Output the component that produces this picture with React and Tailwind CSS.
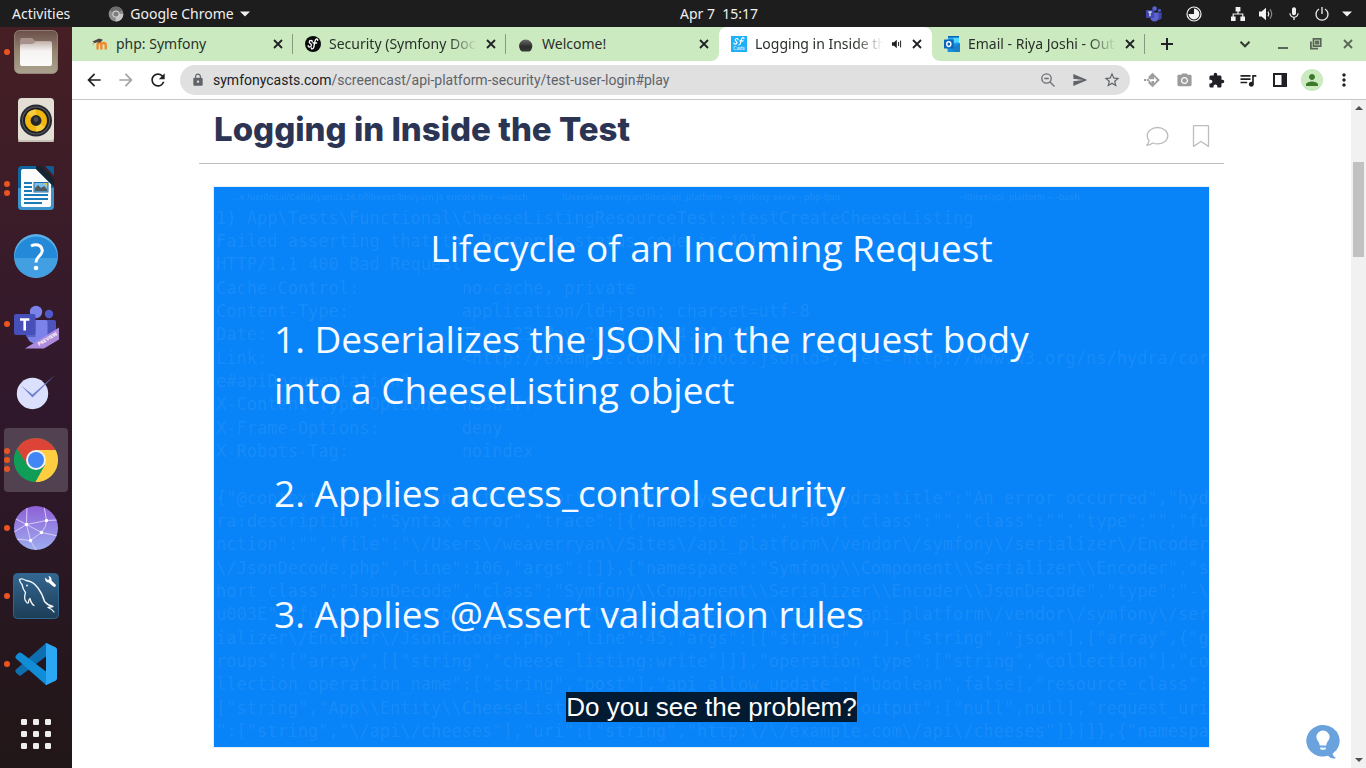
import React from "react";
import {
  MdArrowBack, MdArrowForward, MdRefresh, MdLock, MdSend, MdStarBorder, MdCameraAlt,
  MdExtension, MdQueueMusic, MdMoreVert, MdPerson, MdMic,
} from "react-icons/md";

const CODE = [
  "1) App\\Tests\\Functional\\CheeseListingResourceTest::testCreateCheeseListing",
  "Failed asserting that the Response status code is 401.",
  "HTTP/1.1 400 Bad Request",
  "Cache-Control:          no-cache, private",
  "Content-Type:           application/ld+json; charset=utf-8",
  "Date:                   Thu, 23 May 2019 15:34:04 GMT",
  "Link:                   <http://example.com/api/docs.jsonld>; rel=\"http://www.w3.org/ns/hydra/cor",
  "e#apiDocumentation\"",
  "X-Content-Type-Options: nosniff",
  "X-Frame-Options:        deny",
  "X-Robots-Tag:           noindex",
  " ",
  "{\"@context\":\"\\/api\\/contexts\\/Error\",\"@type\":\"hydra:Error\",\"hydra:title\":\"An error occurred\",\"hyd",
  "ra:description\":\"Syntax error\",\"trace\":[{\"namespace\":\"\",\"short_class\":\"\",\"class\":\"\",\"type\":\"\",\"fu",
  "nction\":\"\",\"file\":\"\\/Users\\/weaverryan\\/Sites\\/api_platform\\/vendor\\/symfony\\/serializer\\/Encoder",
  "\\/JsonDecode.php\",\"line\":106,\"args\":[]},{\"namespace\":\"Symfony\\\\Component\\\\Serializer\\\\Encoder\",\"s",
  "hort_class\":\"JsonDecode\",\"class\":\"Symfony\\\\Component\\\\Serializer\\\\Encoder\\\\JsonDecode\",\"type\":\"-\\",
  "u003E\",\"function\":\"decode\",\"file\":\"\\/Users\\/weaverryan\\/Sites\\/api_platform\\/vendor\\/symfony\\/ser",
  "ializer\\/Encoder\\/JsonEncoder.php\",\"line\":45,\"args\":[[\"string\",\"\"],[\"string\",\"json\"],[\"array\",{\"g",
  "roups\":[\"array\",[[\"string\",\"cheese_listing:write\"]]],\"operation_type\":[\"string\",\"collection\"],\"co",
  "llection_operation_name\":[\"string\",\"post\"],\"api_allow_update\":[\"boolean\",false],\"resource_class\":",
  "[\"string\",\"App\\\\Entity\\\\CheeseListing\"],\"input\":[\"null\",null],\"output\":[\"null\",null],\"request_uri",
  "\":[\"string\",\"\\/api\\/cheeses\"],\"uri\":[\"string\",\"http:\\/\\/example.com\\/api\\/cheeses\"]}]]},{\"namespa",
];

/* ---------- small glyphs ---------- */

function TeamsMini() {
  return (
    <svg viewBox="0 0 16 16" className="size-4">
      <circle cx="13.4" cy="4.4" r="1.7" fill="#4b53bc" />
      <circle cx="8.6" cy="2.6" r="2.3" fill="#5b62d0" />
      <path d="M11.5 6.6h4.2v4.6a2.6 2.6 0 0 1-4.2 2z" fill="#3f46a8" />
      <path d="M4.5 6.6h8v5a4 4 0 0 1-8 0z" fill="#5b62d0" />
      <rect x="0" y="4" width="8" height="8" rx=".8" fill="#4048b0" />
      <path d="M2.2 6h3.6M4 6v4.2" stroke="#fff" strokeWidth="1.1" />
    </svg>
  );
}

function TimerGlyph() {
  return (
    <svg viewBox="0 0 16 16" className="size-4">
      <circle cx="8" cy="8" r="7" fill="none" stroke="#f2f2f2" strokeWidth="1.2" />
      <path d="M8 8V2.6A5.4 5.4 0 1 1 2.6 8z" fill="#f2f2f2" />
    </svg>
  );
}

function NetworkGlyph() {
  return (
    <svg viewBox="0 0 16 16" className="size-4" fill="#f2f2f2">
      <path d="M5.6 1h4.8v4.5H5.6zM1 10.5h4.6V15H1zM10.4 10.5H15V15h-4.6z" />
      <path d="M8 5v3M3.2 11V8h9.6v3" fill="none" stroke="#f2f2f2" strokeWidth="1.2" />
    </svg>
  );
}

function VolumeGlyph() {
  return (
    <svg viewBox="0 0 16 16" className="size-4">
      <path d="M1 5.5h2.6L8 1.8v12.4L3.6 10.5H1z" fill="#f2f2f2" />
      <path d="M10 5.6q1.6 2.4 0 4.8" fill="none" stroke="#f2f2f2" strokeWidth="1.2" />
      <path d="M12 3.4q3.4 4.6 0 9.2" fill="none" stroke="#8a8a8a" strokeWidth="1.2" />
    </svg>
  );
}

function PowerGlyph() {
  return (
    <svg viewBox="0 0 16 16" className="size-4" fill="none" stroke="#f2f2f2" strokeWidth="1.3">
      <path d="M5 3a6 6 0 1 0 6 0M8 1v7" />
    </svg>
  );
}

function Caret() {
  return (
    <svg viewBox="0 0 10 6" className="h-1.5 w-2.5 shrink-0" fill="#f2f2f2">
      <path d="M0 .5h10L5 5.5z" />
    </svg>
  );
}

function CrossGlyph() {
  return (
    <svg viewBox="0 0 12 12" className="size-3" fill="none" stroke="currentColor" strokeWidth="1.8">
      <path d="m2 2 8 8M10 2l-8 8" />
    </svg>
  );
}

function TabAudioGlyph() {
  return (
    <svg viewBox="0 0 12 12" className="size-3 shrink-0" fill="#202124">
      <path d="M1 4.300h2L5.800 1.800v8.400L3 7.700H1z" />
      <path d="M7.600 4v4M9.600 2.600v6.800" fill="none" stroke="#202124" strokeWidth="1" />
    </svg>
  );
}

function ChromeMono() {
  return (
    <svg viewBox="0 0 16 16" className="size-4 shrink-0">
      <circle cx="8" cy="8" r="7.4" fill="#8e8e8e" />
      <path d="M8 8 1.6 4.4A7.4 7.4 0 0 1 14.4 4.4z" fill="#6c6c6c" />
      <path d="M8 8h7.4A7.4 7.4 0 0 1 7.6 15.4z" fill="#c4c4c4" />
      <circle cx="8" cy="8" r="3.6" fill="#dcdcdc" />
      <circle cx="8" cy="8" r="2.6" fill="#7d7d7d" />
    </svg>
  );
}

/* ---------- favicons ---------- */

function MoodleIcon() {
  return (
    <svg viewBox="0 0 16 16" className="size-4 shrink-0">
      <path d="M5.6 13.4V8.6q0-1.6 1.9-1.6t1.9 1.6v4.8M9.4 13.4V8.6q0-1.6 2.1-1.6t2.2 1.6v4.8" fill="none" stroke="#f28a2c" strokeWidth="2.4" />
      <path d="M.5 5.6 7 2.6l4 1.2-2.8 2.6-3.4-.2-2.2 1z" fill="#4a4642" />
      <path d="M1.4 6.2q-1 2 0 3.2" fill="none" stroke="#d9a777" strokeWidth=".9" />
    </svg>
  );
}

function SymfonyIcon() {
  return (
    <svg viewBox="0 0 16 16" className="size-4 shrink-0">
      <circle cx="8" cy="8" r="8" fill="#0a0a0a" />
      <g fill="none" stroke="#fff" strokeLinecap="round" strokeWidth="1.3">
        <path d="M7.2 5.9q.2-1.5-1.2-1.5-1.7.1-1.8 1.6c0 1.6 2.3 1.5 2.2 3.2q-.2 1.8-2 1.8-1.4 0-1.2-1.3" />
        <path d="M12.6 4.3q.2-1.4-1.1-1.3-1.3.3-1.8 3.4L8.9 10.8q-.5 2.2-1.9 2.1-.8-.1-.6-.9M8.2 7h3.4" />
      </g>
    </svg>
  );
}

function BallIcon() {
  return (
    <svg viewBox="0 0 16 16" className="size-4 shrink-0">
      <defs>
        <linearGradient id="ball" x1="0" y1="0" x2="0" y2="1">
          <stop offset="0" stopColor="#6a6a6a" />
          <stop offset=".6" stopColor="#2c2c2c" />
          <stop offset="1" stopColor="#3a3a3a" />
        </linearGradient>
      </defs>
      <path d="M4 15.6A6.6 6.6 0 1 1 11.4 15.6z" fill="url(#ball)" />
    </svg>
  );
}

function CastsIcon() {
  return (
    <svg viewBox="0 0 16 16" className="size-4 shrink-0">
      <rect width="16" height="16" fill="#1fb0fa" />
      <g fill="none" stroke="#fff" strokeLinecap="round" strokeWidth="1.2">
        <path d="M7 3.6q0-1.2-1.3-1.1-1.5.2-1.5 1.5c0 1.2 1.9 1.2 1.8 2.6q-.2 1.5-1.8 1.5-1.3 0-1.2-1" />
        <path d="M13 2.6q0-1-1.1-.9-1.3.3-1.7 2.6L9.5 7.2q-.4 1.7-1.6 1.7M8.8 4.8h3.4" />
      </g>
      <text x="2.2" y="14.400" fontSize="4.800" fontFamily="Lato, sans-serif" fill="#fff">Casts</text>
    </svg>
  );
}

function OutlookIcon() {
  return (
    <svg viewBox="0 0 16 16" className="size-4 shrink-0">
      <rect x="4" y="0" width="11" height="9" fill="#28a8ea" />
      <rect x="9.5" y="1.5" width="5.5" height="5" fill="#50d9ff" />
      <rect x="4" y="0" width="11" height="1.5" fill="#0364b8" />
      <path d="M3.5 8.5 16 7v8a1 1 0 0 1-1 1H4.5a1 1 0 0 1-1-1z" fill="#1490df" />
      <path d="M16 7.5 8 12l2 4h5a1 1 0 0 0 1-1z" fill="#1a7fc9" />
      <rect x="0" y="3.6" width="9.6" height="9" rx=".6" fill="#0a63bd" />
      <ellipse cx="4.8" cy="8.1" rx="2.1" ry="2.4" fill="none" stroke="#fff" strokeWidth="1.4" />
    </svg>
  );
}

/* ---------- dock icons ---------- */

function FilesIcon() {
  return (
    <svg viewBox="0 0 44 44" className="size-11">
      <defs>
        <linearGradient id="fi" x1="0" y1="0" x2="0" y2="1">
          <stop offset="0" stopColor="#6a4f49" />
          <stop offset=".5" stopColor="#958672" />
          <stop offset="1" stopColor="#aaa28f" />
        </linearGradient>
        <linearGradient id="ff" x1="0" y1="0" x2="0" y2="1">
          <stop offset="0" stopColor="#c2b2ac" />
          <stop offset=".4" stopColor="#f6f4f3" />
          <stop offset="1" stopColor="#fbfafa" />
        </linearGradient>
      </defs>
      <rect x=".5" y=".5" width="43" height="43" rx="5" fill="url(#fi)" stroke="#9b8f7f" strokeWidth=".8" />
      <path d="M6 10q0-2 2-2h9q1.5 0 2.5 1.4T22 11h14q2 0 2 2v6H6z" fill="#a8918d" />
      <path d="M6 16q0-2 2-2h10q2 0 4-2.8h14q2 0 2 2V34q0 2-2 2H8q-2 0-2-2z" fill="url(#ff)" />
    </svg>
  );
}

function RhythmIcon() {
  return (
    <svg viewBox="0 0 44 44" className="size-11">
      <rect x="4" y="0" width="36" height="44" rx="4" fill="#e3dfd4" />
      <rect x="4" y="42" width="36" height="2" rx="1" fill="#c5c1b6" />
      <circle cx="22" cy="22.5" r="16" fill="#272a33" />
      <circle cx="22" cy="22.5" r="14" fill="#5b5d62" />
      <circle cx="22" cy="22.5" r="13" fill="#1d1f25" />
      <circle cx="22" cy="22.5" r="11" fill="#f0b70f" />
      <path d="M22 22.5 13 16A11 11 0 0 1 22 11.5zM22 22.5l9 6.5a11 11 0 0 1-9 4.5z" fill="#f7cd3e" />
      <circle cx="22" cy="22.5" r="5.4" fill="#25272b" />
      <circle cx="22" cy="21.5" r="2.4" fill="#4a4c50" />
    </svg>
  );
}

function WriterIcon() {
  return (
    <svg viewBox="0 0 44 44" className="size-11">
      <path d="M8 0h18l14 14v26q0 4-4 4H8q-4 0-4-4V4q0-4 4-4z" fill="#0f66a0" />
      <path d="M4 22h36v18q0 4-4 4H8q-4 0-4-4z" fill="#3b94cc" />
      <path d="M9 3h13l15 15v21q0 2-2 2H9q-2 0-2-2V5q0-2 2-2z" fill="#fcfcfc" />
      <path d="M22 3V0h5l13 13v8z" fill="#16242f" />
      <path d="M31 0h8q1 0 1 1v9z" fill="#0e5c93" />
      <path d="M10 17h8M10 21h8M10 25h8M10 29h24M10 33h24M10 37h18" stroke="#1b7ab8" strokeWidth="2" />
      <rect x="20" y="16.500" width="14" height="9.500" fill="#7fc0e8" stroke="#1b6ea8" strokeWidth="1" />
      <path d="M21 25v-3l3-3 3 3 3-2 3 3v2z" fill="#505a5f" />
      <path d="M30 17h3v3z" fill="#f1c232" />
    </svg>
  );
}

function HelpIcon() {
  return (
    <svg viewBox="0 0 44 44" className="size-11">
      <circle cx="22" cy="22" r="22" fill="#59b1ea" />
      <path d="M.5 24a21.5 21.5 0 1 1 43 0z" fill="#2489d8" />
      <path d="M.5 24a21.5 19.5 0 0 0 43 0z" fill="#429fe2" />
      <path d="M17 12q5-2.500 9 0 4 3.500 1 8l-3 3.500q-2 2-2 5" fill="none" stroke="#fff" strokeWidth="3" />
      <circle cx="22" cy="34" r="2.3" fill="#fff" />
    </svg>
  );
}

function TeamsIcon() {
  return (
    <svg viewBox="0 0 46 44" className="mt-1.5 h-11 w-[46px]">
      <circle cx="36" cy="9" r="4.2" fill="#5059c9" />
      <circle cx="23" cy="7" r="6.2" fill="#7b83eb" />
      <path d="M32 15h9q2 0 2 2v11q0 6-6 7h-5z" fill="#4d55bd" />
      <path d="M13.500 15h19q2 0 2 2v14q0 8-10 8.5-11-1.500-11-11.500z" fill="#7b83eb" />
      <path d="M11.500 15h11v17h-9q-1-3-1-6z" fill="#5961c4" />
      <rect x="1" y="9" width="21.5" height="21" rx="2" fill="#4650b8" />
      <path d="M7 14.500h9.400M11.700 14.500v11" stroke="#fff" strokeWidth="2.600" />
      <path d="M12 43.500 46 22.500v12L31 43.500z" fill="#ad8bdc" />
      <text x="26" y="41" fontSize="5" fontWeight="700" fontFamily="Open Sans, sans-serif" fill="#fff" transform="rotate(-31 26 41)">PREVIEW</text>
    </svg>
  );
}

function TodoIcon() {
  return (
    <svg viewBox="0 0 44 44" className="size-11">
      <circle cx="18.500" cy="23.500" r="15.700" fill="#dbe0fc" />
      <path d="M7 15.500 18.500 24.500 41 5 18.500 27.500z" fill="#6f80cf" />
    </svg>
  );
}

function ChromeIcon() {
  return (
    <svg viewBox="0 0 44 44" className="size-11">
      <circle cx="22" cy="22" r="22" fill="#109d58" />
      <path d="M22 0a22 22 0 0 1 19.600 12H22L13.300 27 3 10.900A22 22 0 0 1 22 0z" fill="#db4437" />
      <path d="M41.600 12A22 22 0 0 1 21.300 44l9.400-17L22 12z" fill="#ffcd40" />
      <path d="m3 10.900 10.300 16.100h17.400L21.300 44A22 22 0 0 1 3 10.900z" fill="#109d58" />
      <circle cx="22" cy="22" r="10" fill="#f1f1f1" />
      <circle cx="22" cy="22" r="8" fill="#4285f4" />
    </svg>
  );
}

function WebIcon() {
  return (
    <svg viewBox="0 0 44 44" className="size-11">
      <defs>
        <linearGradient id="web" x1="0" y1="0" x2="0" y2="1">
          <stop offset="0" stopColor="#8e5fd8" />
          <stop offset="1" stopColor="#9daef0" />
        </linearGradient>
        <clipPath id="webclip"><circle cx="22" cy="22" r="22" /></clipPath>
      </defs>
      <circle cx="22" cy="22" r="22" fill="url(#web)" />
      <g clipPath="url(#webclip)" fill="none" stroke="#d9ccf5" strokeWidth="1">
        <path d="M0 12 12.500 18.500 27.500 26.500 44 30M0 26 12.500 18.500 32.500 14.500 44 14M12.500 18.500 13 0M12.500 18.500 16.500 34.500 23 46M32.500 14.500 30 0M32.500 14.500Q33 20 27.500 26.500L16.500 34.500 2 33" />
      </g>
      <g fill="#fff">
        <circle cx="12.500" cy="18.500" r="1.700" />
        <circle cx="32.500" cy="14.500" r="1.700" />
        <circle cx="27.500" cy="26.500" r="1.700" />
        <circle cx="16.500" cy="34.500" r="1.700" />
      </g>
    </svg>
  );
}

function WorkbenchIcon() {
  return (
    <svg viewBox="0 0 46 46" className="size-[46px]">
      <defs>
        <linearGradient id="wb" x1="0" y1="0" x2="0" y2="1">
          <stop offset="0" stopColor="#336791" />
          <stop offset="1" stopColor="#1d3d57" />
        </linearGradient>
      </defs>
      <rect x=".5" y=".5" width="45" height="45" rx="4" fill="url(#wb)" stroke="#2f6690" />
      <g fill="none" stroke="#f3f7fa" strokeWidth="1.300" strokeLinejoin="round" strokeLinecap="round">
        <path d="M41 39q-2-3-6-4.500l5-1q-5-1-8.500-5Q30 22 25 15 20 8 13 7.500 9 5 6.500 6.500q0 2 2.500 5 1 5 3.500 8-2 6 .5 9 1.500 2.500 2.500 1 0-3 1.500-4 1 5 4 7" />
      </g>
      <circle cx="14" cy="12.500" r=".9" fill="#f3f7fa" />
      <path d="M32 4.500l3 2.500 1.500-1-1-3q3.500.500 3 4.500l4.500 4.500q0 2-2 2L35.500 9.500q-3.500 0-3.500-5z" fill="#fff" />
    </svg>
  );
}

function CodeIcon() {
  return (
    <svg viewBox="0 0 44 44" className="size-11">
      <path d="M32 1 2 27.500q-1.400 1.500 0 3L4.500 33q1.500 1 3 0L32 14.500z" fill="#0e6fb0" />
      <path d="m32 43-30-26.500q-1.400-1.500 0-3L4.500 11q1.500-1 3 0L32 29.500z" fill="#118dd8" />
      <path d="M31 1.500q.8-.8 2-.3l8.500 4Q43 6 43 7.500v29q0 1.500-1.500 2.300l-8.500 4q-1.200.5-2-.3 1 .5 1-1V2.500q0-1.500-1-1z" fill="#2ba7f3" />
    </svg>
  );
}

function AppsIcon() {
  return (
    <svg viewBox="0 0 30 30" className="size-[30px]" fill="#eeeeec">
      {[0, 12, 24].map((y) => [0, 12, 24].map((x) => <rect key={`${x}-${y}`} x={x} y={y} width="6" height="6" rx="1.300" />))}
    </svg>
  );
}

const DOCK = [
  { name: "Files", Icon: FilesIcon, dots: 1, first: true },
  { name: "Rhythmbox", Icon: RhythmIcon, dots: 0 },
  { name: "LibreOffice Writer", Icon: WriterIcon, dots: 2 },
  { name: "Help", Icon: HelpIcon, dots: 0 },
  { name: "Microsoft Teams", Icon: TeamsIcon, dots: 1 },
  { name: "To Do", Icon: TodoIcon, dots: 0 },
  { name: "Google Chrome", Icon: ChromeIcon, dots: 3, active: true },
  { name: "Web", Icon: WebIcon, dots: 1 },
  { name: "MySQL Workbench", Icon: WorkbenchIcon, dots: 1 },
  { name: "Visual Studio Code", Icon: CodeIcon, dots: 1 },
];

function DockItem({ name, Icon, dots, first, active }) {
  return (
    <button
      aria-label={name}
      className={`relative flex w-16 shrink-0 items-center justify-center rounded ${first ? "h-[57px] pb-[7px]" : "h-16"} ${active ? "bg-[#524251]" : ""}`}
    >
      <span className={`absolute inset-y-0 left-0 flex flex-col items-center justify-center gap-[3px] ${first ? "pb-[7px]" : ""}`}>
        {Array.from({ length: dots }, (_, i) => <span key={i} className="size-1.5 rounded-full bg-[#e95420]" />)}
      </span>
      <Icon />
    </button>
  );
}

function Dock() {
  return (
    <nav aria-label="Dock" className="flex w-[72px] shrink-0 flex-col items-center gap-1 overflow-hidden bg-gradient-to-b from-[#461f24] via-[#30182c] to-[#211617]">
      {DOCK.map((d) => <DockItem key={d.name} {...d} />)}
      <button aria-label="Show applications" className="mt-auto flex h-[68px] w-16 shrink-0 items-center justify-center">
        <AppsIcon />
      </button>
    </nav>
  );
}

function TopBar() {
  return (
    <header className="grid h-[27px] shrink-0 grid-cols-[1fr_auto_1fr] items-center bg-[#1d1d1d] px-3 text-sm text-[#f0f0f0]">
      <div className="flex items-center gap-[38px]">
        <button>Activities</button>
        <button className="flex items-center gap-1.5">
          <ChromeMono />
          <span>Google Chrome</span>
          <Caret />
        </button>
      </div>
      <button className="ml-[72px] whitespace-pre">Apr 7  15:17</button>
      <div className="flex items-center justify-end">
        <span className="mr-6"><TeamsMini /></span>
        <span className="mr-7"><TimerGlyph /></span>
        <button aria-label="System menu" className="flex items-center gap-3 pr-0.5">
          <NetworkGlyph />
          <VolumeGlyph />
          <MdMic className="size-4" />
          <PowerGlyph />
          <Caret />
        </button>
      </div>
    </header>
  );
}

const TABS = [
  { title: "php: Symfony", Icon: MoodleIcon, sep: true },
  { title: "Security (Symfony Docs)", Icon: SymfonyIcon, sep: true, fade: true },
  { title: "Welcome!", Icon: BallIcon },
  { title: "Logging in Inside the Test", Icon: CastsIcon, active: true, fade: true },
  { title: "Email - Riya Joshi - Outlook", Icon: OutlookIcon, sep: true, fade: true },
];

function Flare({ right }) {
  return (
    <svg viewBox="0 0 8 8" className={`absolute bottom-0 size-2 ${right ? "left-full" : "right-full"}`} fill="#fff">
      <path d={right ? "M0 0a8 8 0 0 0 8 8H0z" : "M8 0a8 8 0 0 1-8 8h8z"} />
    </svg>
  );
}

function Tab({ title, Icon, sep, active, fade }) {
  return (
    <div
      role="tab"
      aria-selected={!!active}
      className={`relative flex w-[213px] min-w-0 items-center gap-2 pr-[9px] pl-3 ${active ? "rounded-t-lg bg-white" : ""}`}
    >
      <Icon />
      <span className={`min-w-0 flex-1 overflow-hidden whitespace-nowrap ${fade ? "[mask-image:linear-gradient(to_right,#000_calc(100%-28px),transparent)]" : ""}`}>
        {title}
      </span>
      {active && <TabAudioGlyph />}
      <button aria-label={`Close ${title}`} className="shrink-0 text-[#202124]"><CrossGlyph /></button>
      {sep && <span className="absolute right-0 h-5 w-px bg-[#859a7e]" />}
      {active && <Flare />}
      {active && <Flare right />}
    </div>
  );
}

function TabStrip() {
  return (
    <div className="flex h-[34px] shrink-0 bg-[#cbeac0] pl-2 text-sm text-[#2a302a]">
      <div role="tablist" className="flex min-w-0">
        {TABS.map((t) => <Tab key={t.title} {...t} />)}
      </div>
      <button aria-label="New tab" className="flex w-11 shrink-0 items-center justify-center">
        <svg viewBox="0 0 12 12" className="size-3" stroke="#202124" strokeWidth="2"><path d="M6 0v12M0 6h12" /></svg>
      </button>
      <div className="ml-auto flex shrink-0 items-center gap-4 pr-2.5 text-[#5a6657]">
        <button aria-label="Search tabs" className="mr-1.5 px-0.5">
          <svg viewBox="0 0 14 14" className="size-[14px]" fill="none" stroke="#303a2d" strokeWidth="2"><path d="m2.500 4.800 4.500 4.500 4.500-4.500" /></svg>
        </button>
        <button aria-label="Minimize" className="pt-2">
          <svg viewBox="0 0 16 4" className="h-1 w-4"><rect x="2" y="1" width="10" height="2" fill="currentColor" /></svg>
        </button>
        <button aria-label="Restore">
          <svg viewBox="0 0 16 16" className="size-4" fill="none" stroke="currentColor" strokeWidth="1.800">
            <path d="M5.500 2.900h7.200v7.200H5.500zM8 5.400h2.200v2.200H8zM2.900 5.500v7.200h7.200" />
          </svg>
        </button>
        <button aria-label="Close window" className="flex w-4 justify-center"><CrossGlyph /></button>
      </div>
    </div>
  );
}

function ToolButton({ label, children }) {
  return (
    <button aria-label={label} className="flex h-8 w-8 shrink-0 items-center justify-center text-[#202124]">
      {children}
    </button>
  );
}

function Toolbar() {
  return (
    <div className="flex h-[39px] shrink-0 items-center border-b border-[#c8c8c8] bg-white px-1.5">
      <ToolButton label="Back"><MdArrowBack className="size-5" /></ToolButton>
      <ToolButton label="Forward"><MdArrowForward className="size-5 text-[#a3a3a3]" /></ToolButton>
      <ToolButton label="Reload"><MdRefresh className="size-5" /></ToolButton>
      <div className="mx-1.5 flex h-[30px] min-w-0 flex-1 items-center rounded-full bg-[#e0e0e0] pr-0.5 pl-[11px]">
        <MdLock className="size-[14px] shrink-0 text-[#5f6368]" />
        <a href="#play" className="ml-2 min-w-0 flex-1 truncate font-['Roboto'] text-sm text-[#5f6368]">
          <span className="text-[#202124]">symfonycasts.com</span>/screencast/api-platform-security/test-user-login#play
        </a>
        <ToolButton label="Zoom">
          <svg viewBox="0 0 16 16" className="size-4" fill="none" stroke="#6a6d71" strokeWidth="1.300">
            <circle cx="6.500" cy="6.500" r="4.700" />
            <path d="m10 10 4.500 4.500M4.300 6.500h4.400" />
          </svg>
        </ToolButton>
        <ToolButton label="Share"><MdSend className="size-4 text-[#5f6368]" /></ToolButton>
        <ToolButton label="Bookmark"><MdStarBorder className="size-[18px] text-[#5f6368]" /></ToolButton>
      </div>
      <ToolButton label="Directions">
        <svg viewBox="0 0 16 16" className="size-4">
          <path d="M8.500.8 15.800 8l-7.300 7.200L4.500 11.300V4.800z" fill="#9e9e9e" />
          <path d="M0 7h2v2H0zM2.800 7h2v2h-2z" fill="#9e9e9e" />
          <path d="M4.500 7.200H10V5l3 3-3 3V9H7.500v2" fill="#fff" />
        </svg>
      </ToolButton>
      <ToolButton label="Screenshot"><MdCameraAlt className="size-[17px] text-[#9c9c9c]" /></ToolButton>
      <ToolButton label="Extensions"><MdExtension className="size-[17px]" /></ToolButton>
      <ToolButton label="Media"><MdQueueMusic className="size-5" /></ToolButton>
      <ToolButton label="Side panel">
        <svg viewBox="0 0 14 14" className="size-[14px]">
          <rect x="1" y="1" width="12" height="12" fill="none" stroke="#202124" strokeWidth="2" />
          <rect x="8.500" y="1" width="5" height="12" fill="#202124" />
        </svg>
      </ToolButton>
      <ToolButton label="Profile">
        <span className="flex size-[22px] items-center justify-center rounded-full bg-[#cbeac0]"><MdPerson className="size-[18px] text-[#3b7a2a]" /></span>
      </ToolButton>
      <ToolButton label="Menu"><MdMoreVert className="size-5" /></ToolButton>
    </div>
  );
}

function Slide() {
  return (
    <figure className="relative mt-[23px] aspect-video overflow-hidden bg-[#0884f8] ring-1 ring-[#e9eef4]">
      <div aria-hidden="true" className="absolute inset-x-0 top-0 flex h-full flex-col pt-[3px] pb-1 pl-0.5 text-white/[0.08]">
        <div className="flex h-4 shrink-0 items-center pl-4 font-['Liberation_Sans'] text-[9px] font-bold whitespace-pre">
          <span className="w-[330px]">...e /usr/local/Cellar/yarn/1.16.0/libexec/bin/yarn.js encore dev --watch</span>
          <span className="flex-1">/Users/weaverryan/Sites/api_platform -- symfony serve - php-fpm</span>
          <span className="w-[250px]">~/Sites/api_platform -- -bash</span>
        </div>
        <pre className="grid flex-1 auto-rows-fr items-center font-['DejaVu_Sans_Mono'] text-[17px] leading-5">
          {CODE.map((l, i) => <code key={i} className="font-['DejaVu_Sans_Mono']">{l}</code>)}
        </pre>
      </div>
      <div className="relative px-[60px] pt-[35px] font-['Open_Sans'] text-[37px] leading-[51px] text-[#f4faff]">
        <h2 className="text-center">Lifecycle of an Incoming Request</h2>
        <p className="mt-10 max-w-[800px]">1. Deserializes the JSON in the request body into a CheeseListing object</p>
        <p className="mt-[52px]">2. Applies access_control security</p>
        <p className="mt-[70px]">3. Applies @Assert validation rules</p>
      </div>
      <figcaption className="absolute inset-x-0 bottom-[25px] flex justify-center">
        <span className="bg-[#021a32] font-['Liberation_Sans'] text-[26px] leading-[30px] text-white">Do you see the problem?</span>
      </figcaption>
    </figure>
  );
}

function Page() {
  return (
    <div className="relative flex min-h-0 flex-1 bg-white">
      <main className="min-w-0 flex-1 overflow-hidden">
        <div className="mx-auto max-w-[1025px]">
          <div className="flex h-16 items-center justify-between border-b border-[#c1c1c1] px-[15px]">
            <h1 className="pb-1.5 font-['Inter'] text-[33px] leading-10 font-extrabold text-[#2c3454]">Logging in Inside the Test</h1>
            <div className="-mr-1 flex gap-5 pt-2">
              <button aria-label="Comments">
                <svg viewBox="0 0 24 24" className="size-6" fill="none" stroke="#bdbdbd" strokeWidth="1.300" strokeLinejoin="round">
                  <path d="M12.500 3.500c5.800 0 10.300 3.700 10.300 8.200s-4.500 8.200-10.300 8.200q-2.600 0-4.700-.9Q5 21.300 1.600 21.300q2.400-2.500 2.400-4.600-1.800-2.200-1.800-5c0-4.500 4.500-8.200 10.300-8.200z" />
                </svg>
              </button>
              <button aria-label="Bookmark lesson">
                <svg viewBox="0 0 24 24" className="size-6" fill="none" stroke="#bdbdbd" strokeWidth="1.300" strokeLinejoin="round">
                  <path d="M5 1.600h14q.5 0 .5.5v20.300L12 17.500l-7.500 4.900V2.100q0-.5.5-.5z" />
                </svg>
              </button>
            </div>
          </div>
          <div className="px-[15px]"><Slide /></div>
        </div>
      </main>
      <button aria-label="Help" className="absolute right-[26px] bottom-2">
        <svg viewBox="0 0 34 35" className="h-[35px] w-[34px]">
          <path d="M17 0a16.500 15.800 0 0 1 9.500 28.800q.5 3 3.500 4.200-4.500 1.800-8-2.200A16.500 15.800 0 1 1 17 0z" fill="#6aa2de" />
          <path d="M17 5.500a6.600 6.600 0 0 1 6.600 6.600c0 3.200-3 4.500-3.300 8.400h-6.600c-.3-3.900-3.300-5.200-3.300-8.400A6.600 6.600 0 0 1 17 5.500z" fill="#fff" />
          <path d="M14 22.500h6v1.500q-3 2-6 0z" fill="#e6effa" />
        </svg>
      </button>
      <div aria-hidden="true" className="flex w-[15px] shrink-0 flex-col items-center justify-between bg-[#f1f1f1] py-1.5">
        <svg viewBox="0 0 8 4" className="h-1 w-2" fill="#505050"><path d="M4 0 8 4H0z" /></svg>
        <div className="flex min-h-0 w-full flex-1 flex-col px-0.5">
          <div className="basis-[52px]" />
          <div className="h-[95px] bg-[#c1c1c1]" />
        </div>
        <svg viewBox="0 0 8 4" className="h-1 w-2" fill="#505050"><path d="M0 0h8L4 4z" /></svg>
      </div>
    </div>
  );
}

export default function App() {
  return (
    <div className="flex h-screen flex-col overflow-hidden font-['Noto_Sans','Open_Sans',sans-serif]">
      <TopBar />
      <div className="flex min-h-0 flex-1">
        <Dock />
        <div className="flex min-w-0 flex-1 flex-col">
          <TabStrip />
          <Toolbar />
          <Page />
        </div>
      </div>
    </div>
  );
}
